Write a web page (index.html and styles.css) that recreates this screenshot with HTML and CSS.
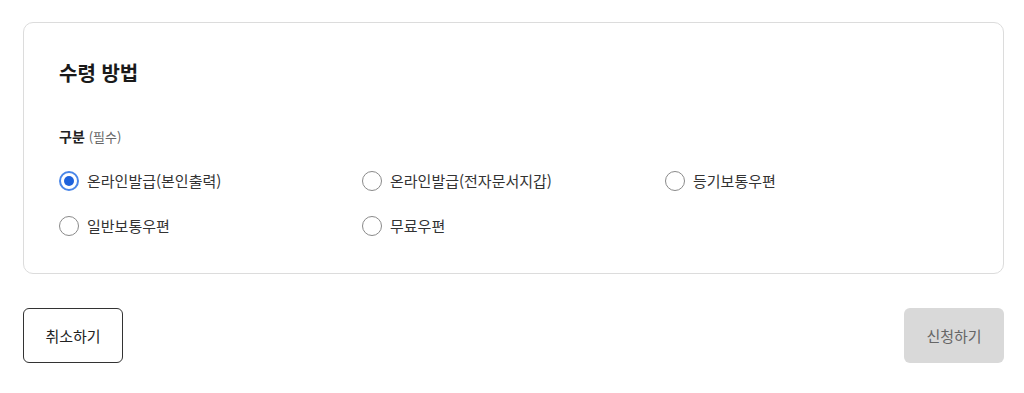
FILE: index.html
```html
<!DOCTYPE html>
<html lang="ko">

<head>
  <meta charset="UTF-8">
  <meta name="viewport" content="width=device-width, initial-scale=1.0">
  <title>수령 방법</title>
  <link rel="stylesheet" href="styles.css">
</head>

<body>
  <div class="page">
    <section class="card">
      <h2 class="card-title">수령 방법</h2>
      <div class="field-label">구분 <span class="required">(필수)</span></div>
      <div class="radio-grid">
        <label class="radio">
          <input type="radio" name="receive" value="online-print" checked>
          <span class="radio-mark"></span>
          온라인발급(본인출력)
        </label>
        <label class="radio">
          <input type="radio" name="receive" value="online-wallet">
          <span class="radio-mark"></span>
          온라인발급(전자문서지갑)
        </label>
        <label class="radio">
          <input type="radio" name="receive" value="registered">
          <span class="radio-mark"></span>
          등기보통우편
        </label>
        <label class="radio">
          <input type="radio" name="receive" value="normal">
          <span class="radio-mark"></span>
          일반보통우편
        </label>
        <label class="radio">
          <input type="radio" name="receive" value="free">
          <span class="radio-mark"></span>
          무료우편
        </label>
      </div>
    </section>

    <div class="actions">
      <button class="btn btn-cancel">취소하기</button>
      <button class="btn btn-submit" disabled>신청하기</button>
    </div>
  </div>
</body>

</html>
```

FILE: styles.css
```css
body {
  margin: 0;
  font-family: "Noto Sans CJK KR", "Noto Sans", sans-serif;
  color: #222;
  background-color: #fff;
}

.page {
  padding: 22px 20px 0 23px;
}

.card {
  border: 1px solid #dcdcdc;
  border-radius: 10px;
  padding: 36px 35px 36px 35px;
}

.card-title {
  margin: 0 0 39px;
  font-size: 20px;
  font-weight: 700;
  line-height: 28px;
  color: #1a1a1a;
}

.field-label {
  font-size: 14px;
  font-weight: 700;
  line-height: 20px;
  margin-bottom: 23px;
  color: #222;
}

.required {
  font-size: 13px;
  font-weight: 400;
  color: #666;
}

.radio-grid {
  display: grid;
  grid-template-columns: repeat(3, 1fr);
  row-gap: 23px;
}

.radio {
  display: flex;
  align-items: center;
  gap: 8px;
  font-size: 15px;
  line-height: 22px;
  color: #333;
  cursor: pointer;
}

.radio input {
  display: none;
}

.radio-mark {
  box-sizing: border-box;
  width: 20px;
  height: 20px;
  border: 1px solid #8a8a8a;
  border-radius: 50%;
  position: relative;
  flex-shrink: 0;
}

.radio input:checked + .radio-mark {
  border: 2px solid #4a86e8;
}

.radio input:checked + .radio-mark::after {
  content: "";
  position: absolute;
  top: 3px;
  left: 3px;
  width: 10px;
  height: 10px;
  border-radius: 50%;
  background-color: #1e62dc;
}

.actions {
  display: flex;
  justify-content: space-between;
  margin-top: 34px;
}

.btn {
  width: 100px;
  height: 55px;
  border-radius: 6px;
  font-family: inherit;
  font-size: 15px;
  cursor: pointer;
}

.btn-cancel {
  background-color: #fff;
  border: 1px solid #333;
  color: #222;
}

.btn-submit {
  background-color: #d9d9d9;
  border: none;
  color: #666;
  cursor: default;
}
```
